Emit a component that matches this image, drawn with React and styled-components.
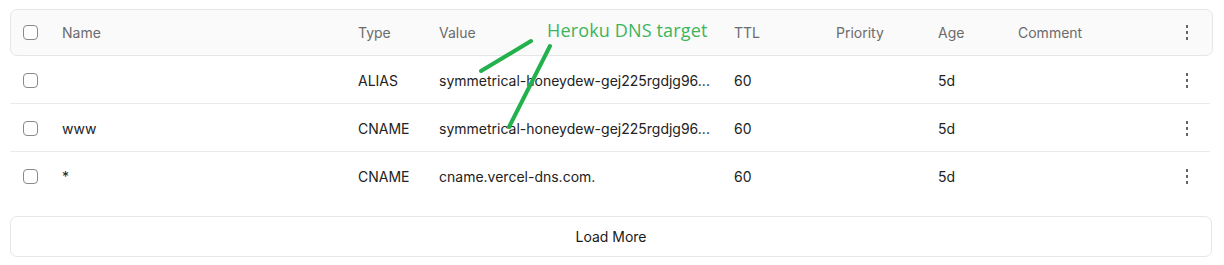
import React from "react";
import styled, { createGlobalStyle } from "styled-components";

const Global = createGlobalStyle`
  html, body { margin: 0; padding: 0; background: #fff; }
  body { font-family: Inter, "Noto Sans", sans-serif; }
`;

const Page = styled.div`
  position: relative;
  padding: 9px 11px 0 10px;
  width: 1224px;
  box-sizing: border-box;
`;

const cols = "39px 296px 81px 295px 102px 102px 80px 1fr 40px";

const HeaderRow = styled.div`
  display: grid;
  grid-template-columns: ${cols};
  align-items: center;
  height: 47px;
  box-sizing: border-box;
  padding: 0 0 0 12px;
  background: #fafafa;
  border: 1px solid #e6e6e6;
  border-radius: 7px;
  font-size: 14px;
  color: #6b6b6b;
`;

const Row = styled.div`
  display: grid;
  grid-template-columns: ${cols};
  align-items: center;
  height: 48px;
  box-sizing: border-box;
  padding: 1px 0 0 13px;
  margin-right: 3px;
  border-bottom: 1px solid ${(p) => (p.$last ? "transparent" : "#ebebeb")};
  font-size: 14px;
  color: #222;
`;

const Check = styled.span`
  display: block;
  width: 13px;
  height: 13px;
  border: 1px solid #8a8a8a;
  border-radius: 4px;
  background: #fff;
`;

const Cell = styled.span`
  white-space: nowrap;
  overflow: hidden;
`;

const Kebab = styled.span`
  display: flex;
  flex-direction: column;
  align-items: center;
  gap: 3px;
  width: 4px;
  justify-self: start;
  margin-left: ${(p) => (p.$head ? "13px" : "15px")};
  & > i {
    display: block;
    width: 2px;
    height: 3px;
    background: #666;
  }
`;

const LoadMore = styled.button`
  display: block;
  width: 1202px;
  height: 41px;
  margin-top: 16px;
  box-sizing: border-box;
  background: #fff;
  border: 1px solid #e6e6e6;
  border-radius: 7px;
  font-family: Inter, "Noto Sans", sans-serif;
  font-size: 14px;
  color: #1a1a1a;
  cursor: pointer;
`;

const Note = styled.span`
  position: absolute;
  left: 547px;
  top: 18px;
  font-family: "Open Sans", "Noto Sans", sans-serif;
  font-size: 18px;
  color: #3cb55a;
  white-space: nowrap;
  letter-spacing: 0.15px;
`;

const Strokes = styled.svg`
  position: absolute;
  left: 0;
  top: 0;
  pointer-events: none;
`;

const Dots = ({ head }) => (
  <Kebab $head={head}>
    <i />
    <i />
    <i />
  </Kebab>
);

const rows = [
  { name: "", type: "ALIAS", value: "symmetrical-honeydew-gej225rgdjg96...", ttl: "60", age: "5d" },
  { name: "www", type: "CNAME", value: "symmetrical-honeydew-gej225rgdjg96...", ttl: "60", age: "5d" },
  { name: "*", type: "CNAME", value: "cname.vercel-dns.com.", ttl: "60", age: "5d" },
];

export default function App() {
  return (
    <Page>
      <Global />
      <HeaderRow>
        <Check />
        <Cell>Name</Cell>
        <Cell>Type</Cell>
        <Cell>Value</Cell>
        <Cell>TTL</Cell>
        <Cell>Priority</Cell>
        <Cell>Age</Cell>
        <Cell>Comment</Cell>
        <Dots head />
      </HeaderRow>
      {rows.map((r, i) => (
        <Row key={i} $last={i === rows.length - 1}>
          <Check />
          <Cell>{r.name}</Cell>
          <Cell>{r.type}</Cell>
          <Cell>{r.value}</Cell>
          <Cell>{r.ttl}</Cell>
          <Cell />
          <Cell>{r.age}</Cell>
          <Cell />
          <Dots />
        </Row>
      ))}
      <LoadMore>Load More</LoadMore>
      <Note>Heroku DNS target</Note>
      <Strokes width="1224" height="265">
        <g stroke="#22b14c" strokeWidth="4" strokeLinecap="round" fill="none">
          <line x1="481" y1="71" x2="531" y2="41" />
          <line x1="550" y1="46" x2="509" y2="127" />
        </g>
      </Strokes>
    </Page>
  );
}
